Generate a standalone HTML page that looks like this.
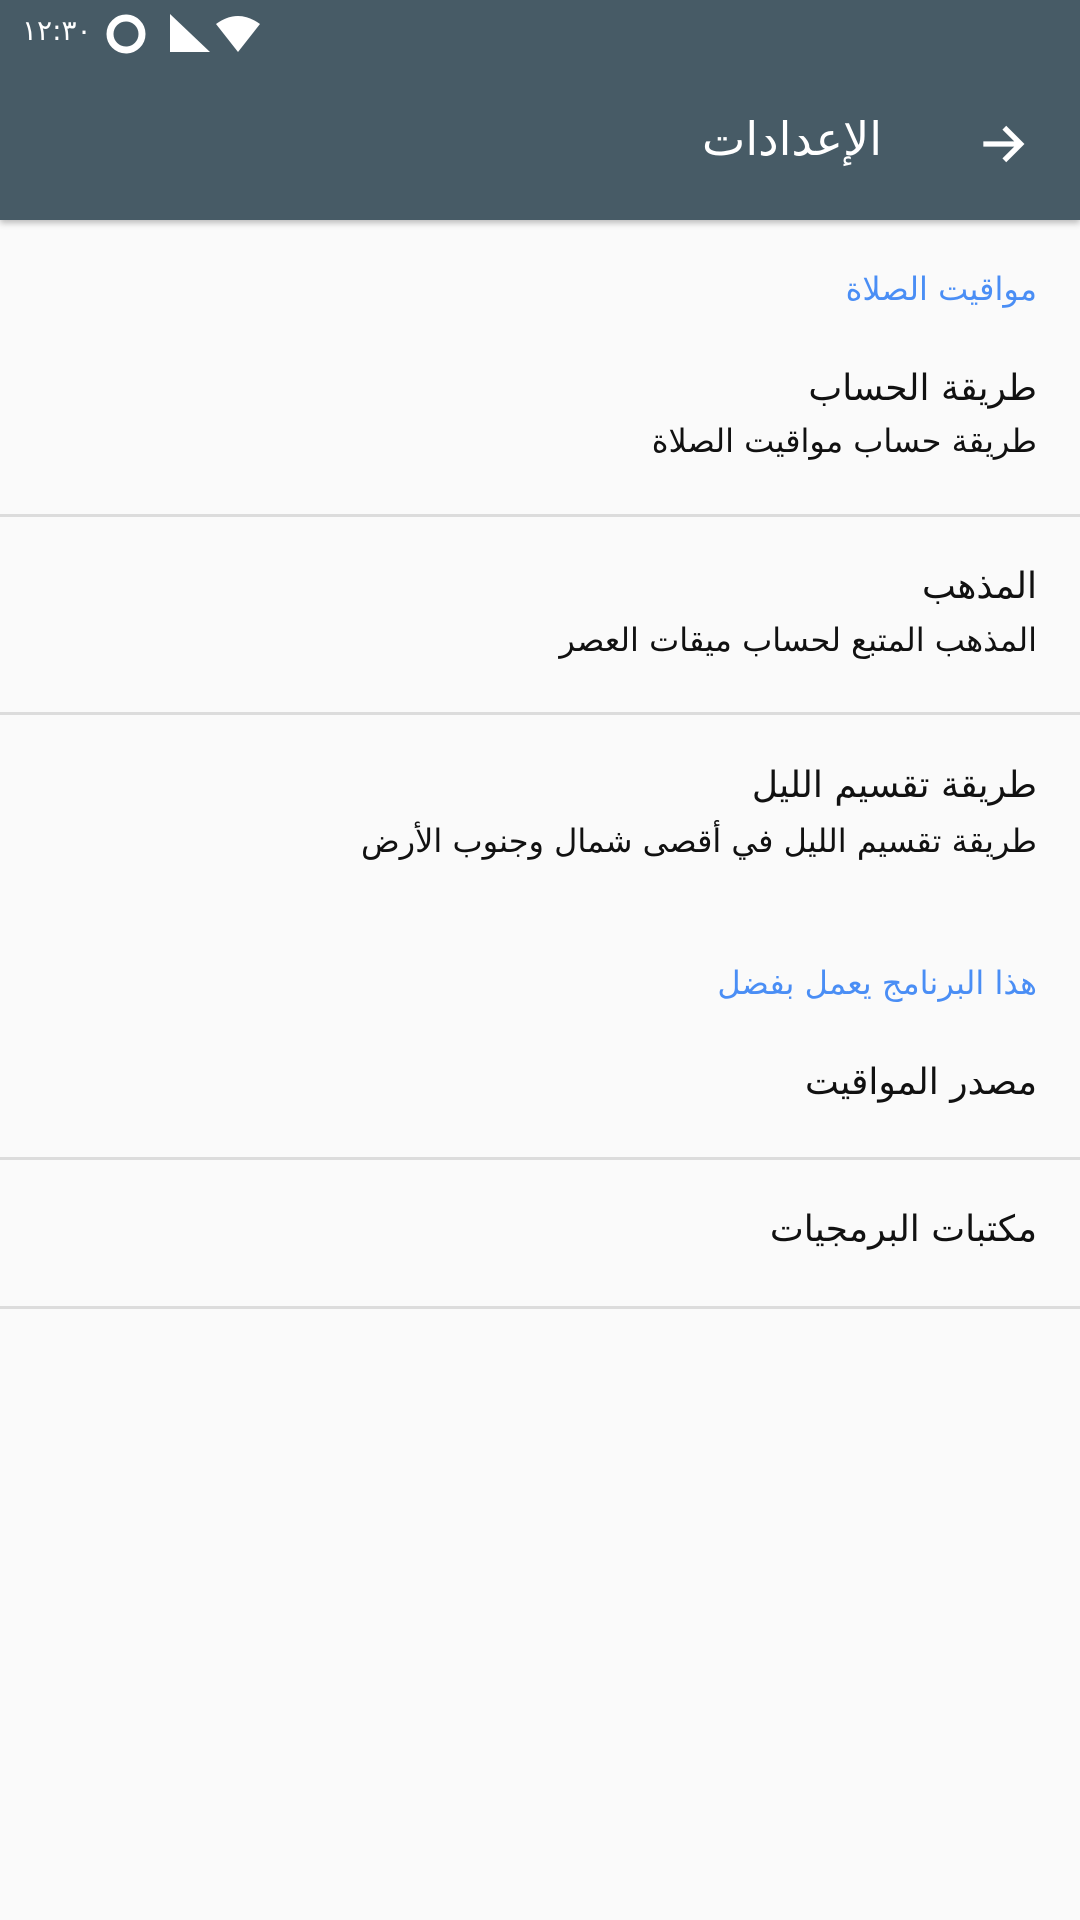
<!DOCTYPE html>
<html><head><meta charset="utf-8"><style>
body{margin:0;width:1080px;height:1920px;background:#fafafa;font-family:"DejaVu Sans","Liberation Sans",sans-serif;position:relative;overflow:hidden}
.bar{position:absolute;left:0;top:0;width:1080px;height:220px;background:#475b66;box-shadow:0 3px 6px rgba(0,0,0,.25)}
.t{position:absolute;right:43px;direction:rtl;white-space:nowrap;line-height:1}
.h{color:#4a8ef5;font-size:32px}
.ti{color:#111;font-size:36px}
.su{color:#111;font-size:32px}
.d{position:absolute;left:0;width:1080px;height:3px;background:#dcdcdc}
</style></head><body>
<div class="bar">
<div style="position:absolute;left:22px;top:14px;color:#fff;font-size:28px">١٢:٣٠</div>
<svg style="position:absolute;left:104px;top:12px" width="160" height="44">
<circle cx="22" cy="22" r="16" fill="none" stroke="#fff" stroke-width="7"/>
<polygon points="66,40 106,40 66,2" fill="#fff"/>
<path d="M112 12 Q134 -4 156 12 L134 40 Z" fill="#fff"/>
</svg>
<div style="position:absolute;right:198px;top:112px;color:#fff;font-size:46px;direction:rtl">الإعدادات</div>
<svg style="position:absolute;left:974px;top:116px" width="56" height="56" viewBox="0 0 24 24"><path d="M4 12h15M13 5l7 7-7 7" fill="none" stroke="#fff" stroke-width="2.3"/></svg>
</div>
<div class="t h" style="top:273px">مواقيت الصلاة</div>
<div class="t ti" style="top:371px">طريقة الحساب</div>
<div class="t su" style="top:425px">طريقة حساب مواقيت الصلاة</div>
<div class="d" style="top:514px"></div>
<div class="t ti" style="top:569px">المذهب</div>
<div class="t su" style="top:624px">المذهب المتبع لحساب ميقات العصر</div>
<div class="d" style="top:712px"></div>
<div class="t ti" style="top:768px">طريقة تقسيم الليل</div>
<div class="t su" style="top:825px">طريقة تقسيم الليل في أقصى شمال وجنوب الأرض</div>
<div class="t h" style="top:967px">هذا البرنامج يعمل بفضل</div>
<div class="t ti" style="top:1065px">مصدر المواقيت</div>
<div class="d" style="top:1157px"></div>
<div class="t ti" style="top:1212px">مكتبات البرمجيات</div>
<div class="d" style="top:1306px"></div>
</body></html>
